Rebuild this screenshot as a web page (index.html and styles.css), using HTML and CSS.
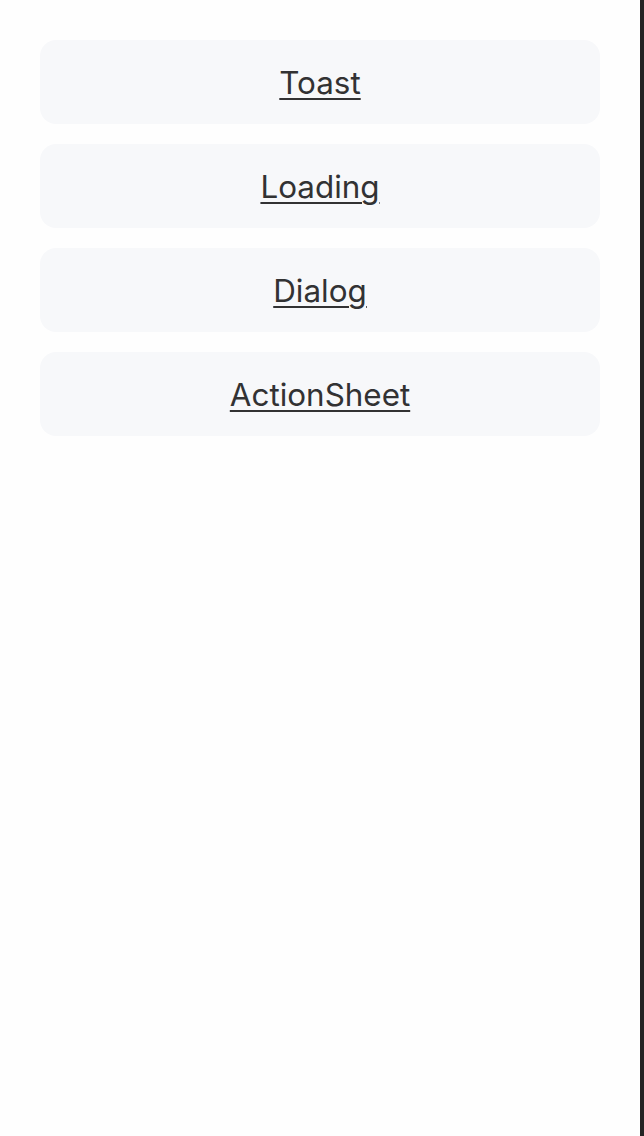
FILE: index.html
```html
<!DOCTYPE html>
<html>
<head>
<meta charset="utf-8">
<link rel="stylesheet" href="styles.css">
</head>
<body>
<div class="page">
  <main class="list">
    <a class="item" href="#"><span class="label">Toast</span></a>
    <a class="item" href="#"><span class="label">Loading</span></a>
    <a class="item" href="#"><span class="label">Dialog</span></a>
    <a class="item" href="#"><span class="label">ActionSheet</span></a>
  </main>
  <div class="edge"></div>
</div>
</body>
</html>
```
FILE: styles.css
```css
html, body {
  margin: 0;
  padding: 0;
  background: #fefefe;
}
.page {
  display: flex;
  min-height: 1136px;
}
.list {
  flex: 1;
  display: flex;
  flex-direction: column;
  gap: 20px;
  padding: 40px 40px 0;
}
.item {
  box-sizing: border-box;
  display: flex;
  align-items: center;
  justify-content: center;
  height: 84px;
  padding-top: 2px;
  border-radius: 16px;
  background: #f7f8fa;
  color: #323233;
  text-decoration: none;
}
.label {
  font-family: Inter, "Liberation Sans", Arial, sans-serif;
  font-size: 31.4px;
  line-height: 40px;
  text-decoration: underline;
  text-decoration-thickness: 2px;
  text-underline-offset: 4px;
  color: #323233;
}
.edge {
  width: 4px;
  background: #242424;
}
```
